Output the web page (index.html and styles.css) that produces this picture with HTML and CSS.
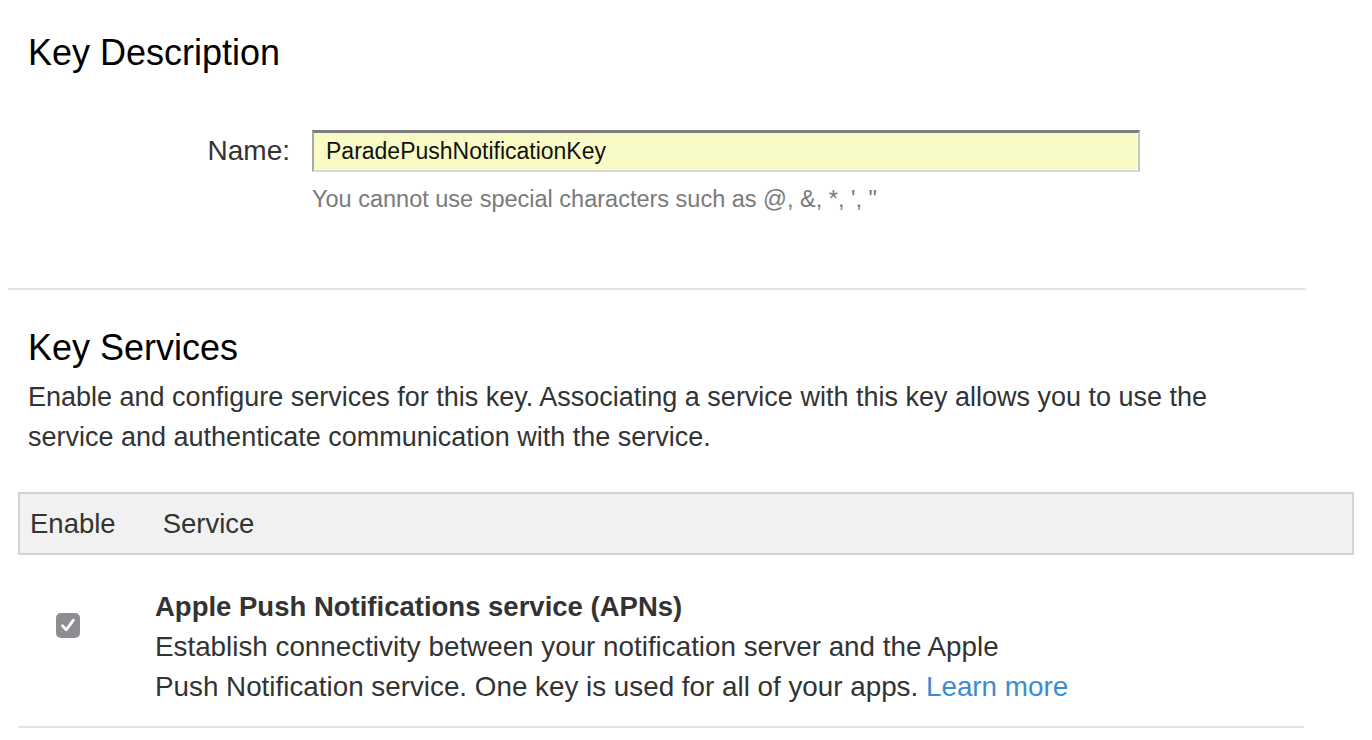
FILE: index.html
```html
<!DOCTYPE html>
<html lang="en">
<head>
<meta charset="utf-8">
<title>Key</title>
<link rel="stylesheet" href="styles.css">
</head>
<body>
<main class="page">
  <section class="block">
    <h2 class="title title-first">Key Description</h2>
    <div class="field">
      <label class="field-label" for="keyname">Name:</label>
      <div class="field-body">
        <input id="keyname" class="text-input" type="text" value="ParadePushNotificationKey">
        <p class="hint">You cannot use special characters such as @, &amp;, *, ', "</p>
      </div>
    </div>
  </section>
  <hr class="divider">
  <section class="block">
    <h2 class="title title-second">Key Services</h2>
    <p class="intro">Enable and configure services for this key. Associating a service with this key allows you to use the service and authenticate communication with the service.</p>
  </section>
  <div class="table">
    <div class="table-head">
      <span class="col-enable">Enable</span>
      <span class="col-service">Service</span>
    </div>
    <div class="table-row">
      <div class="row-check">
        <span class="checkbox">
          <svg viewBox="0 0 24 24" width="24" height="24" aria-hidden="true"><path d="M6.5 12.8 L10.2 16.8 L17.4 7.2" fill="none" stroke="#fff" stroke-width="2.8" stroke-linecap="round" stroke-linejoin="round"/></svg>
        </span>
      </div>
      <div class="row-service">
        <div class="service-name">Apple Push Notifications service (APNs)</div>
        <div class="service-desc">Establish connectivity between your notification server and the Apple<br>Push Notification service. One key is used for all of your apps. <a class="link" href="#">Learn more</a></div>
      </div>
    </div>
  </div>
</main>
</body>
</html>
```
FILE: styles.css
```css
* { box-sizing: border-box; }
html, body { margin: 0; padding: 0; background: #fff; }
body {
  font-family: "Liberation Sans", Arial, Helvetica, sans-serif;
  color: #333;
  width: 1372px;
}
.page { padding: 0; }
.block { padding-left: 28px; }
.title {
  margin: 0;
  font-size: 36px;
  line-height: 40px;
  font-weight: normal;
  color: #000;
}
.title-first { padding-top: 33px; }
.title-second { padding-top: 38px; }

.field {
  display: flex;
  align-items: flex-start;
  margin-top: 57px;
}
.field-label {
  width: 262px;
  text-align: right;
  font-size: 28px;
  line-height: 42px;
  color: #333;
}
.field-body {
  margin-left: 22px;
  display: flex;
  flex-direction: column;
}
.text-input {
  width: 828px;
  height: 42px;
  margin: 0;
  padding: 0 12px;
  font-family: "Liberation Sans", Arial, sans-serif;
  font-size: 23px;
  color: #111;
  background: #f9fbc6;
  border-style: solid;
  border-width: 3px 2px 2px 2px;
  border-color: #7e7e7e #c4c4c4 #dadada #a8a8a8;
  box-shadow: inset -1px -1px 0 #fff;
  outline: none;
}
.hint {
  margin: 14px 0 0;
  font-size: 23.5px;
  line-height: 26px;
  color: #7a7a7a;
}
.divider {
  margin: 76px 0 0 8px;
  width: 1298px;
  height: 2px;
  border: 0;
  background: #e4e4e4;
}
.intro {
  margin: 9px 0 0;
  width: 1260px;
  font-size: 27px;
  line-height: 40px;
  color: #333;
}
.table {
  margin: 35px 0 0 18px;
  width: 1336px;
}
.table-head {
  display: flex;
  background: #f1f1f1;
  border: 2px solid #d4d4d4;
  padding: 15px 0 14px 10px;
  font-size: 27.5px;
  line-height: 30px;
  color: #333;
}
.col-service { margin-left: 47px; }
.table-row {
  display: flex;
  width: 1286px;
  padding: 32px 0 19px;
  border-bottom: 2px solid #e4e4e4;
}
.row-check {
  width: 137px;
  padding: 26px 0 0 38px;
}
.checkbox {
  display: block;
  width: 24px;
  height: 25px;
  border-radius: 5px;
  background: #8d8d91;
}
.checkbox svg { display: block; }
.service-name {
  font-size: 27.5px;
  line-height: 40px;
  font-weight: bold;
  color: #333;
}
.service-desc {
  font-size: 27.8px;
  line-height: 40px;
  color: #333;
}
.link {
  color: #3a8dd0;
  text-decoration: none;
}
```
